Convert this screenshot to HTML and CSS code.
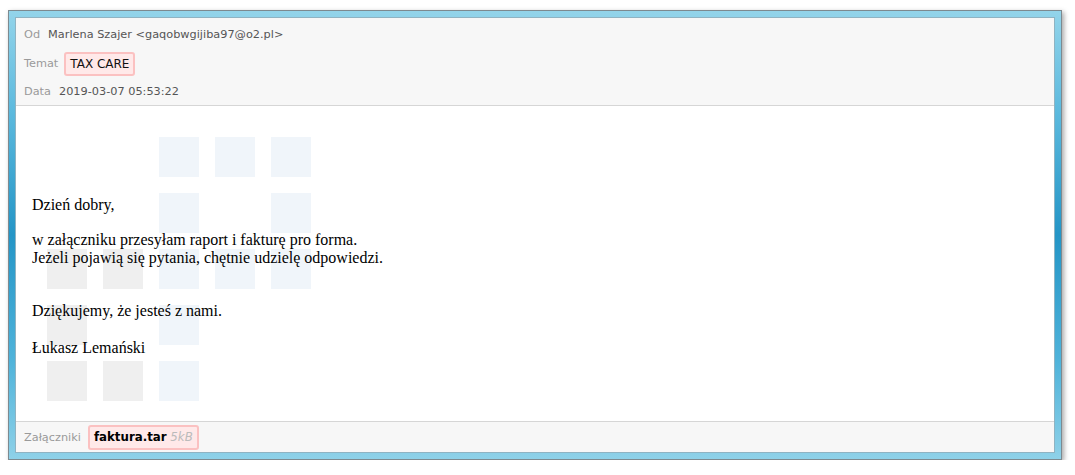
FILE: index.html
```html
<!DOCTYPE html>
<html lang="pl">
<head>
    <meta charset="UTF-8">
    <meta name="viewport" content="width=device-width, initial-scale=1.0">
    <title>Wiadomość - TAX CARE</title>
    <link rel="stylesheet" href="styles.css">
</head>
<body>
    <div class="window">
        <div class="mail">
            <div class="mail-head">
                <div class="row">
                    <span class="label">Od</span>
                    <span class="value">Marlena Szajer &lt;gaqobwgijiba97@o2.pl&gt;</span>
                </div>
                <div class="row">
                    <span class="label">Temat</span>
                    <span class="tag subject">TAX CARE</span>
                </div>
                <div class="row">
                    <span class="label">Data</span>
                    <span class="value">2019-03-07 05:53:22</span>
                </div>
            </div>

            <div class="mail-body">
                <div class="watermark">
                    <i></i><i></i><i class="b"></i><i class="b"></i><i class="b"></i>
                    <i></i><i></i><i class="b"></i><i></i><i class="b"></i>
                    <i class="g"></i><i class="g"></i><i class="b"></i><i class="b"></i><i class="b"></i>
                    <i class="g"></i><i></i><i class="b"></i><i></i><i></i>
                    <i class="g"></i><i class="g"></i><i class="b"></i><i></i><i></i>
                </div>
                <div class="text">
                    <p>Dzień dobry,</p>
                    <p class="p2">w załączniku przesyłam raport i fakturę pro forma.<br>Jeżeli pojawią się pytania, chętnie udzielę odpowiedzi.</p>
                    <p class="p3">Dziękujemy, że jesteś z nami.</p>
                    <p class="p4">Łukasz Lemański</p>
                </div>
            </div>

            <div class="mail-foot">
                <span class="label">Załączniki</span>
                <span class="tag file"><b>faktura.tar</b> <em>5kB</em></span>
            </div>
        </div>
    </div>
</body>
</html>
```

FILE: styles.css
```css
body {
    margin: 0;
    background: #fff;
    font-family: "DejaVu Sans", Verdana, sans-serif;
    font-size: 11.3px;
}
.window {
    width: 1040px;
    height: 436px;
    margin: 10px 0 0 8px;
    padding: 6px;
    border: 1px solid #7d8a90;
    background: linear-gradient(to bottom, #93d4ea 0%, #5dbade 22%, #2495c6 50%, #4fb3da 78%, #8ed1e8 100%);
    box-shadow: 2px 2px 5px rgba(0, 0, 0, 0.35);
}
.mail {
    height: 434px;
    border: 1px solid #8fb3c2;
    background: #fff;
    display: flex;
    flex-direction: column;
}
.mail-head {
    background: #f7f7f7;
    border-bottom: 1px solid #d6d6d6;
    padding: 2px 0 0 8px;
}
.row {
    height: 29px;
    display: flex;
    align-items: center;
    gap: 8px;
}
.row:last-child {
    height: 27px;
}
.label {
    color: #9a9a9a;
}
.value {
    color: #555;
}
.tag {
    background: #ffe9e9;
    border: 2px solid #fbc1c1;
    border-radius: 3px;
    color: #111;
}
.subject {
    height: 20px;
    line-height: 20px;
    padding: 0 4px;
    margin-left: -2px;
    font-size: 12px;
}
.mail-body {
    flex: 1;
    position: relative;
    overflow: hidden;
}
.watermark {
    position: absolute;
    left: 31px;
    top: 31px;
    display: grid;
    grid-template-columns: repeat(5, 40px);
    grid-auto-rows: 40px;
    gap: 16px;
}
.watermark .b {
    background: #f0f5fa;
}
.watermark .g {
    background: #efefef;
}
.text {
    position: relative;
    padding: 90px 16px 0;
    font-family: "Liberation Serif", "Times New Roman", serif;
    font-size: 16px;
    line-height: 18px;
    color: #000;
}
.text p {
    margin: 0;
}
.text .p2 {
    margin-top: 17px;
}
.text .p3 {
    margin-top: 35px;
}
.text .p4 {
    margin-top: 19px;
}
.mail-foot {
    height: 30px;
    background: #f7f7f7;
    border-top: 1px solid #d6d6d6;
    padding-left: 8px;
    display: flex;
    align-items: center;
    gap: 7px;
}
.file {
    height: 21px;
    line-height: 21px;
    padding: 0 4px;
    font-size: 11.8px;
}
.file b {
    color: #000;
}
.file em {
    color: #bbb;
}
```
